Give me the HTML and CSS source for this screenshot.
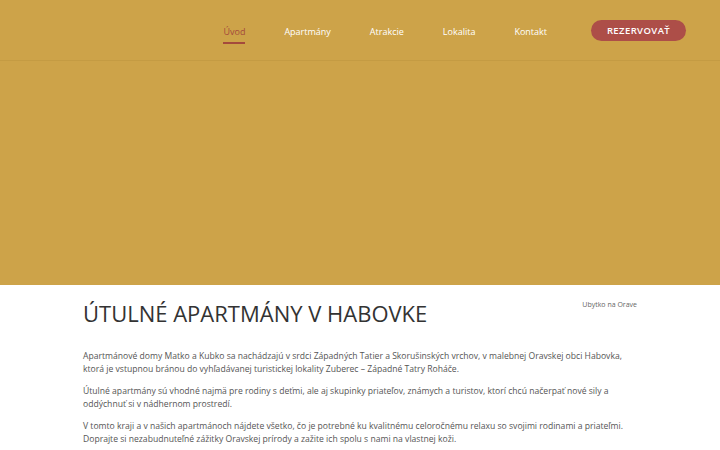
FILE: index.html
```html
<!DOCTYPE html>
<html lang="sk">
<head>
<meta charset="utf-8">
<title>Ubytko na Orave</title>
<link rel="stylesheet" href="styles.css">
</head>
<body>
<header class="header">
  <div class="header-inner">
    <nav class="nav">
      <a class="nav-link active" href="#">Úvod</a>
      <a class="nav-link" href="#">Apartmány</a>
      <a class="nav-link" href="#">Atrakcie</a>
      <a class="nav-link" href="#">Lokalita</a>
      <a class="nav-link" href="#">Kontakt</a>
    </nav>
    <a class="btn" href="#">REZERVOVAŤ</a>
  </div>
</header>
<section class="hero"></section>
<main class="content">
  <div class="title-row">
    <h1 class="title">ÚTULNÉ APARTMÁNY V HABOVKE</h1>
    <span class="tag">Ubytko na Orave</span>
  </div>
  <p>Apartmánové domy Matko a Kubko sa nachádzajú v srdci Západných Tatier a Skorušinských vrchov, v malebnej Oravskej obci Habovka, ktorá je vstupnou bránou do vyhľadávanej turistickej lokality Zuberec – Západné Tatry Roháče.</p>
  <p>Útulné apartmány sú vhodné najmä pre rodiny s deťmi, ale aj skupinky priateľov, známych a turistov, ktorí chcú načerpať nové sily a oddýchnuť si v nádhernom prostredí.</p>
  <p>V tomto kraji a v našich apartmánoch nájdete všetko, čo je potrebné ku kvalitnému celoročnému relaxu so svojimi rodinami a priateľmi. Doprajte si nezabudnuteľné zážitky Oravskej prírody a zažite ich spolu s nami na vlastnej koži.</p>
</main>
</body>
</html>
```
FILE: styles.css
```css
* { box-sizing: border-box; }
body {
  margin: 0;
  font-family: "Open Sans", "Liberation Sans", sans-serif;
  background: #ffffff;
  color: #555555;
}
.header {
  background: #cda349;
  height: 61px;
  border-bottom: 1px solid #c49b43;
}
.header-inner {
  height: 60px;
  display: flex;
  align-items: center;
  justify-content: flex-end;
  padding-right: 34px;
}
.nav {
  display: flex;
  gap: 39px;
  margin-right: 44px;
}
.nav-link {
  color: #ffffff;
  text-decoration: none;
  font-size: 9px;
  padding: 4px 0 4px;
  border-bottom: 2px solid transparent;
  margin-top: 4px;
}
.nav-link.active {
  color: #a44a3c;
  border-bottom-color: #a44a3c;
}
.btn {
  display: inline-flex;
  align-items: center;
  justify-content: center;
  width: 95px;
  height: 21px;
  border-radius: 11px;
  background: #ad4e48;
  color: #ffffff;
  font-size: 9.5px;
  font-weight: 600;
  letter-spacing: 0.4px;
  text-decoration: none;
}
.hero {
  background: #cda349;
  height: 224px;
}
.content {
  width: 554px;
  margin: 0 auto;
  padding-top: 13px;
}
.title-row {
  display: flex;
  justify-content: space-between;
  align-items: flex-start;
  margin-bottom: 22px;
}
.title {
  margin: 0;
  font-size: 22px;
  font-weight: 500;
  color: #333333;
  line-height: 30px;
}
.tag {
  font-size: 7px;
  color: #666666;
  margin-top: 2px;
}
p {
  font-size: 8.6px;
  line-height: 13px;
  margin: 0 0 9px;
}
```
